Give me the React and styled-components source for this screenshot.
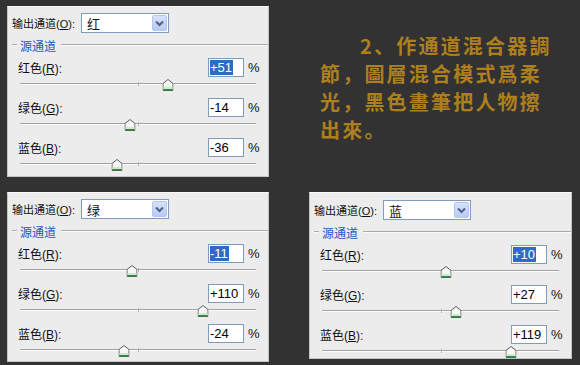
import React from 'react'
import styled, { createGlobalStyle } from 'styled-components'

const Global = createGlobalStyle`
  html, body {
    margin: 0;
    padding: 0;
    background: #323232;
  }
`

const Page = styled.div`
  width: 580px;
  height: 365px;
  overflow: hidden;
  box-sizing: border-box;
  padding: 6px 0 0 7px;
  display: grid;
  grid-template-columns: 262px 263px;
  grid-template-rows: 171px 170px;
  column-gap: 40px;
  row-gap: 15px;
  align-items: start;
`

const Panel = styled.div`
  box-sizing: border-box;
  height: ${p => p.$h}px;
  background: #ececec;
  border: 1px solid #c4c4c4;
  border-top-color: #f8f8f8;
  padding-top: ${p => p.$top}px;
  font-family: "Liberation Sans", "Noto Sans CJK SC", sans-serif;
  font-size: 12px;
  color: #111;
`

const OutputRow = styled.div`
  display: flex;
  align-items: center;
  height: 20px;
  padding-left: 4px;
`

const OutLabel = styled.span`
  flex: none;
  width: 69px;
  white-space: nowrap;
  font-size: 11px;
`

const Select = styled.div`
  box-sizing: border-box;
  width: 88px;
  height: 20px;
  background: #fff;
  border: 1px solid #7f9db9;
  display: flex;
  align-items: center;
  padding: 0 1px 0 5px;
  font-size: 13px;
`

const SelectText = styled.span`
  flex: 1;
`

const DropButton = styled.div`
  box-sizing: border-box;
  width: 15px;
  height: 16px;
  border: 1px solid #b4c6ef;
  border-radius: 2px;
  background: linear-gradient(#d7e2fb, #b9cbf5);
  display: flex;
  align-items: center;
  justify-content: center;
`

const GroupHeader = styled.div`
  display: flex;
  align-items: center;
  margin: 6px 0 7px;
  height: 12px;
  padding-left: 4px;
`

const GroupLine = styled.div`
  height: 0;
  border-top: 1px solid #a9a9a9;
  border-bottom: 1px solid #fafafa;
  width: ${p => (p.$grow ? 'auto' : '5px')};
  flex: ${p => (p.$grow ? 1 : 'none')};
`

const GroupTitle = styled.span`
  color: #2457c5;
  margin: 0 5px 0 3px;
`

const ValueRow = styled.div`
  display: flex;
  align-items: center;
  height: 19px;
  padding-left: 10px;
`

const RowLabel = styled.span`
  flex: 1;
  white-space: nowrap;
`

const Accel = styled.span`
  text-decoration: underline;
`

const Input = styled.div`
  box-sizing: border-box;
  width: 36px;
  height: 19px;
  background: #fff;
  border: 1px solid #7f9db9;
  display: flex;
  align-items: center;
  padding-left: 1px;
  font-size: 13px;
  color: #000;
`

const Selected = styled.span`
  background: #316ac5;
  color: #fff;
  line-height: 15px;
  padding-right: 1px;
`

const Percent = styled.span`
  width: 20px;
  margin-left: 4px;
  font-size: 13px;
`

const Slider = styled.div`
  height: 21px;
  box-sizing: border-box;
  padding-top: 6px;
  margin: 0 12px;
`

const Track = styled.div`
  position: relative;
  height: 1px;
  background: #a3a3a3;
  border-bottom: 1px solid #fdfdfd;
  border-radius: 1px 0 0 1px;
`

const Tick = styled.div`
  position: absolute;
  left: 50%;
  top: -1px;
  width: 1px;
  height: 4px;
  background: #b3b3b3;
`

const Thumb = styled.svg`
  position: absolute;
  top: -4px;
  transform: translateX(-50%);
  display: block;
`

const Note = styled.div`
  padding: 26px 0 0 11px;
  font-family: "Noto Sans CJK SC", sans-serif;
  font-weight: 700;
  font-size: 20px;
  line-height: 28px;
  letter-spacing: 2.2px;
  color: #ad7f1d;
  white-space: nowrap;
`

const NoteLine = styled.div`
  padding-left: ${p => p.$indent || 0}px;
`

const Chevron = () => (
  <svg width="9" height="7" viewBox="0 0 9 7">
    <path d="M1 1.5 L4.5 5 L8 1.5" fill="none" stroke="#4d6185" strokeWidth="2" />
  </svg>
)

const Knob = ({ value }) => (
  <Thumb width="11" height="12" viewBox="0 0 11 12" style={{ left: `${((value + 200) / 400) * 100}%` }}>
    <path d="M5.5 0.5 L10.5 4.5 V11.5 H0.5 V4.5 Z" fill="#f6f8f6" stroke="#5a5a5a" />
    <rect x="1" y="8" width="9" height="2" fill="#cfe6d0" />
    <rect x="1" y="10" width="9" height="1.5" fill="#2f8c42" />
  </Thumb>
)

const Channel = ({ name, accel, value, selected }) => {
  const text = value > 0 ? `+${value}` : `${value}`
  return (
    <>
      <ValueRow>
        <RowLabel>
          {name}(<Accel>{accel}</Accel>):
        </RowLabel>
        <Input>{selected ? <Selected>{text}</Selected> : text}</Input>
        <Percent>%</Percent>
      </ValueRow>
      <Slider>
        <Track>
          <Tick />
          <Knob value={value} />
        </Track>
      </Slider>
    </>
  )
}

const Mixer = ({ output, values, h, top = 6 }) => (
  <Panel $h={h} $top={top}>
    <OutputRow>
      <OutLabel>
        输出通道(<Accel>O</Accel>):
      </OutLabel>
      <Select>
        <SelectText>{output}</SelectText>
        <DropButton>
          <Chevron />
        </DropButton>
      </Select>
    </OutputRow>
    <GroupHeader>
      <GroupLine />
      <GroupTitle>源通道</GroupTitle>
      <GroupLine $grow />
    </GroupHeader>
    <Channel name="红色" accel="R" value={values[0]} selected />
    <Channel name="绿色" accel="G" value={values[1]} />
    <Channel name="蓝色" accel="B" value={values[2]} />
  </Panel>
)

const App = () => {
  return (
    <>
      <Global />
      <Page>
        <Mixer output="红" values={[51, -14, -36]} h={171} />
        <Note>
          <NoteLine $indent={40}>2、作通道混合器調</NoteLine>
          <NoteLine>節，圖層混合模式爲柔</NoteLine>
          <NoteLine>光，黑色畫筆把人物擦</NoteLine>
          <NoteLine>出來。</NoteLine>
        </Note>
        <Mixer output="绿" values={[-11, 110, -24]} h={170} />
        <Mixer output="蓝" values={[10, 27, 119]} h={167} top={7} />
      </Page>
    </>
  )
}

export default App
